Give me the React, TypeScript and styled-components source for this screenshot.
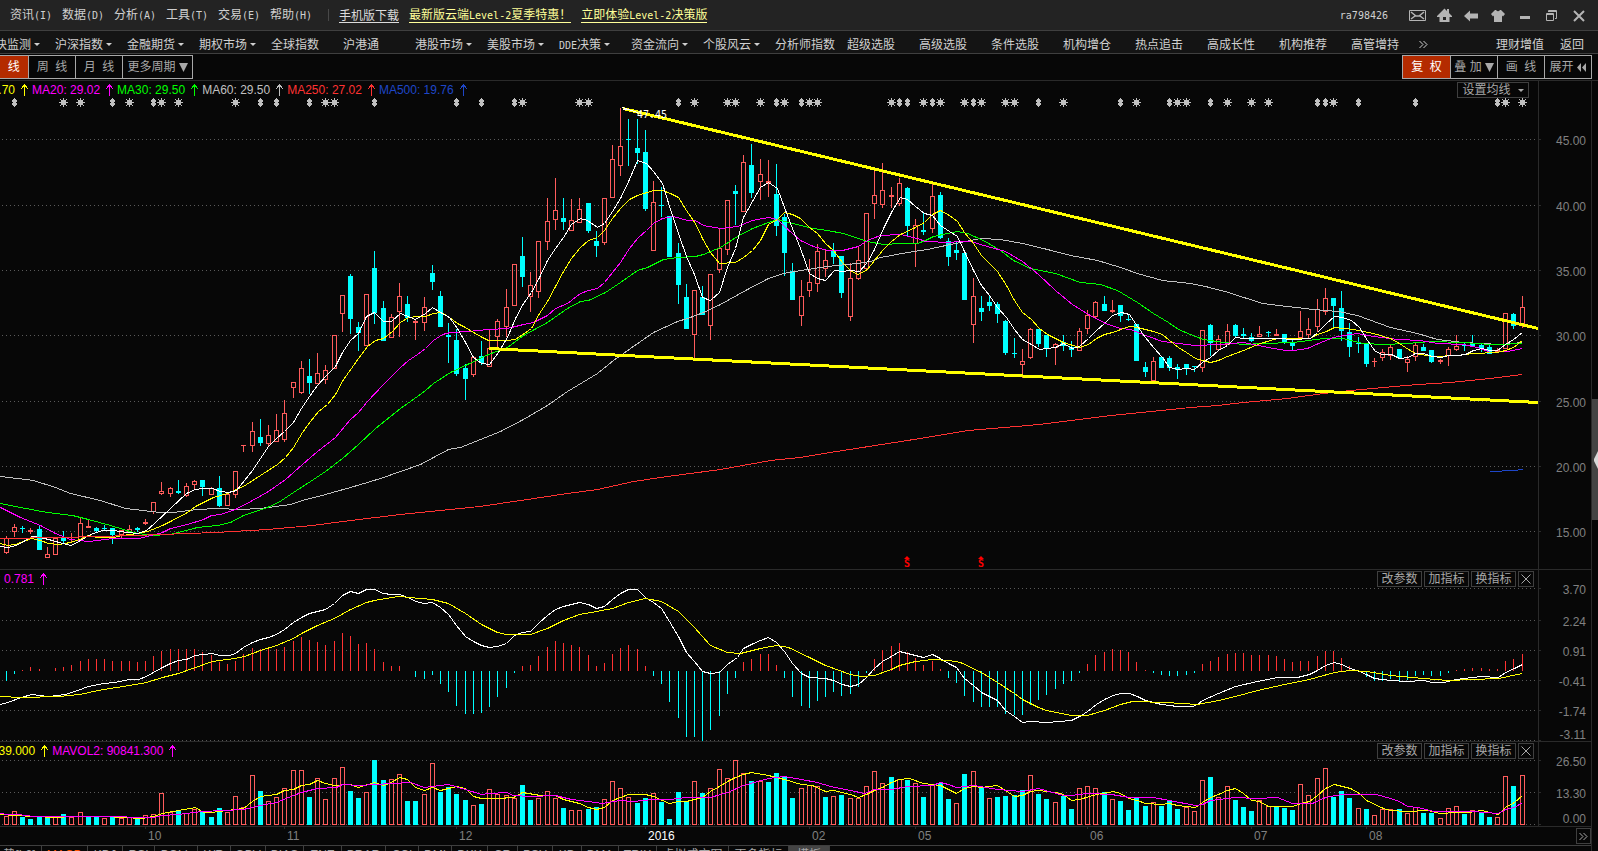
import React from "react";
import styled, { createGlobalStyle, css } from "styled-components";

/* ------------------------------------------------------------------ theme */

const color = {
  title: "#232323",
  nav: "#141414",
  page: "#070707",
  edge: "#3f3f3f",
  line: "#2a2a2a",
  button: "#a8a8a8",
  active: "#b42b00",
  text: "#d0d0d0",
  dim: "#808080",
  up: "#ff5c5c",
  down: "#00ffff",
  yellow: "#ffff00",
  magenta: "#ff00ff",
  green: "#00ff00",
  silver: "#c0c0c0",
  red: "#ff3232",
  blue: "#1e46c8",
};

const cjk = `"Liberation Sans", "Noto Sans CJK SC", sans-serif`;

const Global = createGlobalStyle`
  * { box-sizing: border-box; }
  body { margin: 0; background: ${color.page}; color: ${color.text};
    font: 12px/16px ${cjk}; overflow: hidden; }
  button { font: inherit; color: inherit; background: none; border: 0; padding: 0; margin: 0;
    white-space: pre; cursor: pointer; }
  a { color: inherit; text-decoration: none; }
  svg { display: block; }
`;

/* ------------------------------------------------------------------- data */

type Candle = { up: boolean; high: number; top: number; bottom: number; low: number };

const CANDLES: Candle[] = `
r536,538,553,554 r524,527,532,537 c526,528,529,533 r528,530,532,534 c526,529,550,550 r547,554,558,558 r538,538,555,555 c531,537,541,543
r533,537,538,542 r517,523,540,540 r520,526,528,528 c527,528,531,532 c525,528,529,530 c528,528,535,544 r530,530,535,538 r525,529,533,533
c527,528,530,532 r519,522,524,525 r502,502,512,514 r482,491,494,495 r487,488,494,497 c480,491,493,494 r483,486,496,497 r480,481,485,489
c480,480,487,496 r487,488,495,495 c476,488,506,507 r494,494,506,506 r471,471,495,498 r445,445,446,452 r422,431,446,452 c419,437,443,446
r425,435,444,446 r414,430,442,442 r400,413,440,442 r382,382,388,398 r361,368,393,394 c359,376,383,394 r353,373,384,384 r365,370,380,384
r335,335,369,369 r295,295,314,332 c274,276,319,334 c322,327,333,351 r294,294,346,346 c251,268,313,324 c301,308,341,341 r314,317,338,338
r283,296,312,337 c296,304,318,322 r319,321,323,340 r297,307,323,331 c265,273,282,290 c291,296,327,327 c323,335,337,363 c329,340,374,376
c364,368,379,400 r357,357,375,377 c341,356,363,365 r329,348,367,367 r319,321,337,347 r289,307,327,337 r264,264,306,306 c237,256,277,287
r272,285,297,312 r241,241,292,298 r198,221,242,250 r178,210,220,230 c198,218,222,230 r199,220,231,231 r198,209,223,223 c203,203,231,233
c231,241,246,257 r198,198,243,245 r145,159,198,198 r108,146,166,176 c119,139,140,166 c119,148,153,164 c130,152,209,211 r181,202,251,251
c187,205,206,217 c216,216,257,257 c243,253,285,304 c284,297,329,329 r290,290,335,358 c286,297,315,315 r274,274,326,340 r228,248,270,273
r200,200,250,255 c185,191,194,225 r155,162,212,212 c144,165,193,198 r159,174,182,200 r160,181,183,197 c164,194,226,236 c214,217,253,276
c263,271,300,300 r280,296,316,326 r259,282,291,297 r244,251,284,292 r250,260,269,277 c243,250,257,264 c256,256,293,298 r263,278,317,321
r247,260,279,280 r213,213,269,269 r170,195,204,219 r163,190,205,208 r187,195,197,208 r178,183,204,206 c187,188,226,237 r219,225,244,267
c213,230,232,235 r184,196,229,233 c192,195,238,239 c238,241,257,266 c241,250,253,260 c250,253,300,300 r278,296,325,343 c296,308,312,321
c295,302,306,311 c302,304,314,323 c320,321,353,355 c338,353,354,358 r349,361,365,378 r328,329,358,359 c329,329,344,347 c335,335,348,357
r343,344,348,365 c335,342,346,351 c341,347,350,357 r328,331,351,351 r310,315,329,334 r301,302,317,319 c296,304,311,311 r300,310,312,313
c305,305,316,322 c315,319,320,321 c324,324,361,361 c362,367,372,377 r357,361,381,381 c357,357,368,368 c356,358,368,371 c364,367,370,379
c364,364,368,375 c366,366,367,372 r330,330,368,372 c324,325,343,356 r335,339,350,350 r324,331,345,345 c324,325,336,337 c328,334,336,338
c333,337,341,342 r326,334,337,337 c331,332,333,337 r329,334,336,336 c334,334,343,344 c340,342,346,350 r311,331,338,338 r318,329,335,338
r299,309,327,332 r288,298,312,315 c298,298,306,327 c291,308,331,341 c323,332,347,357 c337,343,344,353 c344,344,364,367 r358,361,362,367
r349,352,358,361 r345,347,356,360 c349,349,358,358 r356,359,363,372 r343,345,357,361 c344,347,351,351 c350,350,362,363 r359,360,362,364
r347,349,356,366 r335,346,350,351 c342,345,346,351 c335,344,346,347 c343,345,348,352 c344,347,354,354 r348,350,352,353 r313,313,349,349
c313,314,326,329 r296,307,325,328
`
  .trim()
  .split(/\s+/)
  .map((t) => {
    const [high, top, bottom, low] = t.slice(1).split(",").map(Number);
    return { up: t[0] === "r", high, top, bottom, low };
  });

/** End of every MACD histogram bar; the zero line is at 671. */
const MACD_BARS = `
681 674 670 667 669 671 668 667 665 661 659 659 659 661 661 661 662 661 656 651 649 649 649 649 652 655 662 664 661 654 648 649 649 649 647 641
637 640 642 645 641 633 636 644 643 649 662 666 666 671 677 679 675 684 692 706 714 714 713 707 697 688 673 666 665 656 647 641 643 645 647 655
666 663 654 648 645 649 666 676 684 702 718 737 737 741 730 716 694 678 662 659 654 654 665 678 697 706 708 701 697 692 696 694 687 673 659 650
646 643 652 658 665 661 669 678 683 696 702 707 707 707 714 715 715 705 700 695 689 684 681 673 664 655 652 649 650 652 662 670 673 675 676 676
675 673 664 661 657 654 653 653 655 655 655 656 659 662 661 661 656 651 651 658 666 670 677 681 681 679 681 680 676 675 676 676 673 670 669 668
668 669 669 661 659 654
`
  .trim()
  .split(/\s+/)
  .map(Number);

const VOLUME: { up: boolean; top: number }[] = `
r816 r811 c817 c819 c816 c817 r817 c814 r817 r812 c816 c816 r818 c817 r818 r817 c818 r815 r814 r793 r812 c811 r813 r809 c812 c817 c808 r812
r796 r807 r775 c791 r801 r797 r788 r770 r770 c797 r778 r799 r778 r767 c791 c798 r792 c760 c780 r779 r774 c801 c801 r794 r763 c792 c787 c794
c800 r805 c804 r789 r794 r795 r798 c785 c800 r798 r791 r798 c808 r810 r810 c809 c807 r799 r781 r788 r797 c803 c798 r793 c802 c819 c792 c801
r781 c793 r788 r769 r778 r760 r773 c781 r781 c782 c773 c777 c798 r788 r785 r786 c797 r796 c795 r798 r798 r786 r771 r783 c777 r779 c780 r783
c797 r785 c783 c799 r803 c774 r771 c787 r798 c797 c796 c795 c790 r775 c794 c799 r802 c796 c809 r788 r786 r788 c792 r799 c801 c810 c798 c806
r802 c806 c800 c809 r807 r811 r780 c777 r797 r786 c800 c807 c811 r800 r806 c807 c808 c810 r784 r795 r778 r768 c797 c791 c798 r808 c809 r815
r809 r809 c809 r813 r807 c813 c813 r818 r808 r806 c814 r810 c812 c817 r817 r776 c786 r775
`
  .trim()
  .split(/\s+/)
  .map((t) => ({ up: t[0] === "r", top: Number(t.slice(1)) }));

const PRICE_LINES = [
  {
    stroke: color.silver,
    points:
      "0,476 17,478 33,480 55,487 70,493 100,500 125,508 160,512 173,512 197,509 217,508 240,509 260,508 290,504 302,500 325,494 350,487 367,482 383,477 400,471 420,464 448,449 460,447 480,439 500,431 523,419 547,405 567,391 597,373 613,360 630,348 653,332 677,321 687,318 703,312 720,304 747,289 768,278 783,273 800,270 827,266 857,263 870,261 880,257 907,252 927,249 950,244 980,238 1000,239 1022,243 1047,249 1070,255 1097,260 1120,267 1137,273 1162,280 1190,283 1205,286 1228,292 1262,303 1287,306 1313,309 1338,311 1357,315 1390,327 1417,333 1437,339 1463,342 1500,344 1512,343 1522,342",
  },
  {
    stroke: color.green,
    points:
      "0,503 20,507 47,512 72,515 88,519 110,525 133,532 150,535 170,534 197,527 217,525 230,522 243,515 267,507 278,502 293,492 310,481 325,471 342,458 358,444 375,428 400,408 417,396 425,390 433,383 450,372 467,364 488,354 507,347 523,335 547,322 567,308 580,301 588,300 605,292 620,282 637,270 647,267 663,259 677,257 695,256 703,254 720,247 737,236 752,228 768,222 777,219 800,225 813,228 827,230 843,233 867,241 883,244 900,243 917,243 925,240 933,236 947,233 957,231 967,233 983,240 1000,250 1013,260 1030,268 1055,273 1080,282 1100,284 1117,290 1137,302 1153,313 1168,322 1178,329 1190,334 1203,339 1223,342 1243,344 1263,343 1293,342 1323,338 1342,338 1363,343 1383,344 1407,343 1430,341 1463,342 1490,344 1498,344 1522,343",
  },
  {
    stroke: color.magenta,
    points:
      "0,507 20,517 40,525 55,533 70,539 88,541 113,538 138,538 147,536 162,532 170,528 187,524 203,519 211,515 220,514 235,509 252,500 268,491 285,479 293,472 302,464 317,451 335,437 350,419 358,412 367,401 383,384 400,367 408,360 417,354 425,348 433,340 442,334 450,332 467,331 488,329 507,328 523,324 533,322 547,315 555,308 567,303 580,293 588,290 597,288 604,282 612,272 620,262 629,248 637,238 646,230 653,223 662,218 673,216 687,220 695,220 703,225 720,228 737,226 752,220 768,217 777,219 784,226 800,240 813,246 827,250 842,250 858,246 867,240 880,235 900,234 917,238 925,241 950,242 958,241 970,241 987,246 1005,251 1022,261 1038,274 1055,290 1072,304 1088,314 1105,323 1120,328 1130,329 1145,335 1162,341 1178,343 1195,345 1218,344 1243,342 1268,347 1285,350 1293,350 1307,348 1318,343 1333,337 1343,335 1357,333 1373,336 1398,339 1420,340 1437,343 1463,344 1477,347 1490,352 1507,351 1522,348",
  },
  {
    stroke: color.yellow,
    points:
      "0,543 7,545 15,544 31,538 40,540 48,543 58,544 70,542 82,538 88,535 97,537 113,537 122,535 137,533 147,531 162,525 170,521 187,512 195,506 203,502 213,497 227,493 243,486 260,475 277,464 285,457 293,447 302,432 310,421 318,411 327,404 335,394 343,379 351,368 358,358 367,346 375,340 383,338 392,331 400,322 408,317 417,316 425,316 433,313 441,312 449,317 457,323 465,327 473,332 482,337 488,340 507,340 515,339 531,328 539,313 547,301 555,286 563,271 571,258 580,247 588,240 597,237 604,230 612,218 620,208 629,199 637,195 653,190 662,190 670,193 678,197 686,210 695,223 702,238 710,252 719,263 735,262 743,257 752,250 760,240 768,224 777,219 784,212 792,214 800,218 809,227 817,233 825,243 833,250 842,262 851,271 858,274 867,269 874,260 883,249 891,241 900,234 915,227 924,222 932,214 940,210 949,215 957,221 964,232 973,243 981,255 989,263 997,271 1006,285 1014,300 1022,312 1031,319 1039,328 1047,334 1063,342 1079,347 1088,344 1096,338 1104,334 1112,332 1129,326 1137,327 1153,331 1162,334 1169,340 1178,347 1186,352 1195,358 1202,360 1210,362 1218,360 1227,356 1243,350 1260,343 1277,338 1310,338 1317,334 1326,331 1334,327 1353,329 1373,333 1390,338 1399,343 1408,349 1415,353 1432,356 1457,355 1473,353 1497,352 1505,350 1513,347 1522,340",
  },
  {
    stroke: "#ffffff",
    points:
      "0,546 7,547 16,545 32,536 40,537 52,540 62,543 71,545 80,540 90,534 102,530 113,530 127,532 137,533 146,530 154,523 170,508 186,493 195,489 203,488 212,488 220,491 228,492 236,490 244,480 252,470 260,458 268,446 276,438 284,431 293,422 301,408 309,396 317,385 326,375 335,366 342,352 350,340 358,333 366,316 374,312 383,321 391,321 400,313 415,319 425,313 432,307 440,312 449,317 457,328 465,342 473,357 481,363 489,364 498,352 507,337 515,318 523,303 531,292 539,277 547,260 555,248 563,237 571,224 580,218 587,220 597,227 604,223 612,211 620,198 629,179 637,160 646,163 653,171 662,183 670,209 678,233 686,256 694,274 702,297 710,300 719,292 727,267 735,248 743,217 752,201 760,187 768,182 777,188 784,207 792,228 800,248 809,273 817,278 825,280 834,270 842,271 850,270 859,271 867,262 874,249 883,228 891,212 900,197 907,199 915,206 924,213 932,215 940,225 949,231 957,236 964,251 973,270 981,285 989,295 997,307 1006,317 1014,329 1022,339 1031,344 1039,349 1047,348 1055,347 1063,343 1072,348 1079,346 1088,338 1096,330 1104,323 1112,315 1121,312 1129,314 1137,326 1145,337 1153,347 1162,357 1169,367 1178,369 1186,368 1194,369 1202,362 1210,357 1218,350 1227,345 1235,337 1243,338 1260,338 1277,338 1293,339 1310,338 1317,332 1326,323 1334,316 1342,317 1351,320 1359,327 1367,340 1375,351 1382,354 1391,354 1399,358 1408,357 1415,353 1423,353 1432,356 1440,357 1449,355 1457,355 1465,354 1473,350 1482,348 1489,350 1497,350 1505,344 1513,339 1522,332",
  },
  {
    stroke: color.red,
    points:
      "0,538 60,537 133,535 215,532 267,529 312,525 350,520 400,514 479,506 527,499 567,493 597,489 633,481 667,476 720,469 770,460 800,457 836,451 907,440 968,430 1039,424 1111,415 1190,407 1217,405 1243,402 1287,398 1323,393 1350,390 1383,387 1417,384 1450,382 1490,378 1522,374",
  },
  { stroke: color.blue, points: "1489,471 1501,471 1502,470 1517,470 1518,469 1522,469" },
];

const MACD_LINES = [
  {
    stroke: "#ffffff",
    points:
      "0,704 7,702 21,697 31,694 48,696 65,694 77,690 88,686 103,683 114,682 129,679 138,679 146,676 153,672 162,667 170,663 178,660 186,659 195,655 203,654 212,653 219,655 229,655 235,653 243,647 252,642 260,639 268,637 276,634 284,629 293,622 301,617 309,613 317,611 325,609 334,603 342,595 350,591 358,593 366,589 374,589 383,593 391,594 399,594 410,598 415,601 424,603 432,602 440,607 448,614 456,625 465,636 473,641 481,645 489,647 497,646 506,643 514,635 522,632 530,631 539,622 547,615 555,609 563,606 579,602 588,604 596,608 604,606 612,599 620,593 628,589 637,589 645,597 653,602 661,608 669,621 678,636 686,652 694,661 702,671 710,673 719,672 727,664 737,657 743,648 751,644 760,640 768,637 776,642 784,651 792,663 801,673 809,677 825,678 833,680 842,684 850,686 858,684 866,677 874,668 882,661 891,656 899,651 915,655 923,657 932,654 940,658 948,663 956,667 964,678 973,685 981,692 997,700 1005,710 1014,716 1022,722 1030,721 1046,722 1071,720 1081,715 1087,711 1096,704 1104,699 1113,695 1120,693 1129,693 1137,696 1145,700 1161,704 1177,706 1192,706 1197,704 1202,700 1218,693 1235,686 1257,681 1277,677 1297,677 1309,674 1317,670 1325,665 1334,662 1341,664 1350,668 1359,671 1366,674 1374,678 1390,680 1407,681 1423,680 1432,682 1443,682 1456,679 1472,677 1481,676 1498,677 1505,672 1514,668 1522,664",
  },
  {
    stroke: color.yellow,
    points:
      "0,696 21,697 59,696 79,694 103,689 129,685 146,682 162,677 178,673 195,667 212,661 234,658 244,656 260,650 276,645 293,638 301,633 317,625 334,618 350,609 366,602 374,600 391,597 399,596 420,598 432,599 448,603 465,613 481,624 497,632 506,634 530,634 547,628 563,620 579,614 596,611 612,608 628,602 645,598 661,601 678,611 694,627 710,645 727,652 740,653 760,648 776,645 788,647 809,657 825,665 850,674 861,676 874,675 891,669 899,665 915,661 932,659 948,660 960,662 981,672 997,682 1014,693 1022,699 1038,707 1046,710 1071,715 1087,715 1104,710 1120,704 1132,701 1166,702 1197,704 1218,700 1235,696 1257,690 1284,684 1309,679 1334,672 1350,670 1366,671 1390,675 1423,678 1448,680 1472,679 1498,678 1522,673",
  },
];

const VOLUME_LINES = [
  {
    stroke: color.yellow,
    points:
      "0,814 14,815 55,817 72,816 103,816 124,817 141,818 153,816 162,813 178,810 195,807 203,812 210,812 227,810 243,808 252,801 260,796 276,794 284,790 293,789 301,785 309,784 317,780 325,783 334,785 350,784 358,787 374,782 383,785 391,782 399,777 407,779 415,787 424,790 432,787 440,790 456,786 465,788 473,796 481,798 497,798 513,797 522,792 540,795 555,795 563,799 579,803 588,807 596,809 604,807 612,800 620,797 628,794 645,794 653,796 669,803 678,801 686,801 702,797 710,791 719,786 727,781 735,777 743,774 751,772 768,775 784,779 801,784 812,785 825,791 833,790 850,794 858,797 866,794 874,790 882,787 891,782 899,779 909,778 923,783 940,785 956,793 964,788 973,786 981,787 997,785 1005,790 1014,796 1022,795 1030,791 1038,790 1055,792 1063,794 1071,800 1079,799 1096,794 1113,791 1120,793 1128,798 1137,800 1145,803 1161,804 1169,803 1177,805 1195,807 1202,802 1210,797 1218,794 1227,790 1235,788 1243,793 1251,800 1259,801 1268,806 1292,806 1301,803 1309,801 1317,795 1325,788 1334,784 1350,788 1359,793 1366,800 1383,808 1390,810 1407,811 1427,810 1440,813 1456,812 1468,812 1481,810 1498,814 1505,807 1514,802 1522,795",
  },
  {
    stroke: color.magenta,
    points:
      "0,813 7,814 17,814 34,816 55,816 114,816 138,817 153,817 162,815 178,814 202,811 243,809 260,805 276,802 293,795 301,792 317,788 336,787 342,784 358,785 375,784 391,783 410,782 424,787 448,784 465,789 481,794 489,793 506,792 513,795 530,796 555,795 571,799 588,801 602,803 620,800 633,801 653,799 669,799 686,797 710,797 727,792 743,785 757,781 768,778 784,776 801,779 817,782 830,786 850,790 864,793 874,789 891,789 907,786 932,785 940,782 948,784 956,787 973,785 997,789 1022,791 1038,788 1063,795 1071,795 1087,793 1111,794 1129,797 1153,797 1169,800 1195,805 1202,804 1210,800 1235,797 1256,798 1277,797 1292,803 1312,803 1325,797 1341,794 1376,794 1390,798 1399,801 1407,806 1417,807 1434,811 1472,811 1498,813 1505,809 1514,807 1522,802",
  },
];

/** Event marks above the candles, by candle index. */
const STARS = [
  7, 9, 15, 19, 21, 28, 39, 40, 63, 70, 71, 84, 88, 89, 92, 95, 98, 99, 108, 112, 114, 117, 119,
  122, 123, 129, 138, 143, 144, 149, 152, 154, 162, 183, 185,
];
const DIAMONDS = [
  1, 13, 18, 31, 33, 37, 45, 55, 58, 62, 82, 94, 97, 109, 110, 113, 118, 126, 136, 142, 147, 160,
  161, 165, 172, 182,
];

const MENU = [
  ["资讯", "(I)"],
  ["数据", "(D)"],
  ["分析", "(A)"],
  ["工具", "(T)"],
  ["交易", "(E)"],
  ["帮助", "(H)"],
];

const NAV: [string, boolean][] = [
  ["板块监测", true],
  ["沪深指数", true],
  ["金融期货", true],
  ["期权市场", true],
  ["全球指数", false],
  ["沪港通", false],
  ["港股市场", true],
  ["美股市场", true],
  ["DDE决策", true],
  ["资金流向", true],
  ["个股风云", true],
  ["分析师指数", false],
  ["超级选股", false],
  ["高级选股", false],
  ["条件选股", false],
  ["机构增仓", false],
  ["热点追击", false],
  ["高成长性", false],
  ["机构推荐", false],
  ["高管增持", false],
];

const TABS: [string, number][] = [
  ["大势[L2]", 56],
  ["MACD", 46],
  ["KDJ", 35],
  ["RSI", 32],
  ["BOLL", 43],
  ["WR", 33],
  ["OBV", 35],
  ["BIAS", 38],
  ["ENE", 38],
  ["BRAR", 44],
  ["CCI", 33],
  ["DMI", 33],
  ["DKX", 36],
  ["CR", 30],
  ["PSY", 35],
  ["KD", 29],
  ["DMA", 37],
  ["TRIX", 38],
  ["虚拟成交图", 72],
  ["更多指标", 60],
  ["模板", 41],
];

const MONTHS: [number, string, boolean?][] = [
  [145, "10"],
  [284, "11"],
  [456, "12"],
  [645, "2016", true],
  [809, "02"],
  [915, "05"],
  [1087, "06"],
  [1251, "07"],
  [1366, "08"],
];

/* ------------------------------------------------------- styled components */

const Page = styled.div`
  display: flex;
  flex-direction: column;
  height: 100vh;
  overflow: hidden;
`;

const TitleBar = styled.header`
  flex: none;
  display: flex;
  align-items: center;
  height: 31px;
  padding: 0 10px 0 10px;
  background: ${color.title};
  border-bottom: 1px solid ${color.edge};
`;

const Menu = styled.nav`
  display: flex;
`;

const MenuButton = styled.button`
  width: 52px;
  text-align: left;
`;

const Latin = styled.span`
  font: 10px/12px "DejaVu Sans Mono", "Liberation Mono", monospace;
`;

const Divider = styled.i`
  width: 1px;
  height: 12px;
  margin: 0 10px 0 6px;
  background: #484848;
`;

const PromoLink = styled.a<{ $hot?: boolean }>`
  margin: 2px 10px 0 0;
  line-height: 12px;
  white-space: nowrap;
  color: ${(p) => (p.$hot ? "#ffff99" : "#dcdcdc")};
  border-bottom: 1px solid currentColor;
`;

const User = styled.span`
  margin: 0 21px 0 auto;
`;

const WindowTools = styled.div`
  display: flex;
  align-items: center;
  gap: 10px;
`;

const ToolButton = styled.button`
  display: block;
  width: 17px;
  height: 15px;
`;

const NavBar = styled.nav`
  flex: none;
  display: flex;
  align-items: center;
  height: 23px;
  padding: 5px 14px 0 0;
  overflow: hidden;
  background: ${color.nav};
  border-bottom: 1px solid ${color.edge};
`;

const NavList = styled.div`
  display: flex;
  margin-left: -17px;
`;

const NavButton = styled.button`
  display: flex;
  flex: none;
  align-items: center;
  gap: 3px;
  width: 72px;
  &:last-child {
    width: 48px;
  }
`;

const Caret = styled.i<{ $tone?: string }>`
  border: 3px solid transparent;
  border-top-color: ${(p) => p.$tone ?? color.text};
  border-bottom: 0;
`;

const MoreButton = styled.button`
  margin-left: 20px;
`;

const NavLinks = styled.div`
  display: flex;
  gap: 16px;
  margin-left: auto;
`;

const ToolBar = styled.div`
  flex: none;
  display: flex;
  justify-content: space-between;
  height: 27px;
  padding: 1px 6px 0 0;
  border-bottom: 1px solid ${color.line};
`;

const Segments = styled.div<{ $clip?: boolean }>`
  display: flex;
  height: 24px;
  margin-left: ${(p) => (p.$clip ? "-20px" : "0")};
  border: 1px solid ${color.button};
`;

const Segment = styled.button<{ $active?: boolean; $wide?: boolean }>`
  display: flex;
  align-items: center;
  justify-content: center;
  gap: 3px;
  width: ${(p) => (p.$wide ? 70 : 47)}px;
  color: ${color.button};
  & + & {
    border-left: 1px solid ${color.button};
  }
  ${(p) =>
    p.$active &&
    css`
      color: #fff;
      background: ${color.active};
    `}
`;

const Workspace = styled.main`
  flex: 1;
  display: flex;
  min-height: 0;
`;

const Panels = styled.div`
  flex: 1;
  display: flex;
  flex-direction: column;
  min-width: 0;
  border-right: 1px solid ${color.line};
`;

const Panel = styled.section<{ $height?: number }>`
  display: flex;
  min-height: 0;
  flex: ${(p) => (p.$height ? `none` : "1")};
  height: ${(p) => (p.$height ? `${p.$height}px` : "auto")};
  border-bottom: 1px solid ${color.line};
`;

const Plot = styled.div`
  position: relative;
  flex: 1;
  min-width: 0;
  border-right: 1px solid ${color.line};
  overflow: hidden;
  svg.plot {
    width: 100%;
    height: 100%;
  }
`;

const Axis = styled.svg`
  flex: none;
  width: 52px;
  height: 100%;
  font: 12px ${cjk};
  fill: ${color.dim};
`;

const Legend = styled.div<{ $shift: number }>`
  position: absolute;
  top: 1px;
  left: 0;
  display: flex;
  margin-left: ${(p) => -p.$shift}px;
  white-space: nowrap;
`;

const LegendItem = styled.span<{ $tone: string }>`
  display: flex;
  align-items: center;
  gap: 6px;
  margin-right: 4px;
  color: ${(p) => p.$tone};
`;

const PanelTools = styled.div`
  position: absolute;
  top: 1px;
  right: 4px;
  display: flex;
  gap: 2px;
`;

const PanelButton = styled.button<{ $width: number }>`
  display: flex;
  align-items: center;
  justify-content: center;
  gap: 7px;
  width: ${(p) => p.$width}px;
  height: 16px;
  line-height: 14px;
  color: ${color.button};
  border: 1px solid ${color.edge};
`;

const AverageTool = styled.div`
  position: absolute;
  top: 1px;
  right: 9px;
`;

const TimeRow = styled.div`
  flex: none;
  display: flex;
  height: 19px;
  border-bottom: 1px solid ${color.edge};
`;

const TimePlot = styled.div`
  flex: 1;
  svg {
    width: 100%;
    height: 100%;
    font: 12px ${cjk};
  }
`;

const ForwardCell = styled.div`
  width: 53px;
  display: flex;
  justify-content: flex-end;
  padding-top: 1px;
`;

const TabRow = styled.div`
  flex: none;
  display: flex;
  height: 5px;
  margin-left: -14px;
  overflow: hidden;
`;

const Tab = styled.button<{ $width: number; $on?: boolean; $filled?: boolean }>`
  flex: none;
  width: ${(p) => p.$width}px;
  height: 18px;
  text-align: center;
  color: ${(p) => (p.$on ? "#ff5500" : color.button)};
  background: ${(p) => (p.$filled ? "#444" : "none")};
  border-right: 1px solid ${color.edge};
`;

const Strip = styled.aside`
  width: 6px;
  display: flex;
  flex-direction: column;
  justify-content: center;
  padding-bottom: 13px;
`;

const StripHandle = styled.button`
  display: flex;
  align-items: center;
  justify-content: flex-end;
  height: 121px;
  background: #444;
`;

/* ----------------------------------------------------------- small pieces */

const barX = (i: number) => Math.floor(6.3 + 8.193 * i);

const Rise = () => (
  <svg width="7" height="12" viewBox="0 0 7 12" shapeRendering="crispEdges">
    <path d="M3.5 0V12M2.5 1V3M4.5 1V3M1.5 2V4M5.5 2V4M0.5 4V5M6.5 4V5" stroke="currentColor" />
  </svg>
);

const Down = ({ size = 9 }: { size?: number }) => (
  <svg width={size} height={size} viewBox="0 0 9 9">
    <path d="M0 0H9L4.5 9Z" fill="currentColor" />
  </svg>
);

const Chevrons = ({ size = 9 }: { size?: number }) => (
  <svg width={size} height={size} viewBox="0 0 9 9" fill="none" stroke="currentColor">
    <path d="M0.5 1L4 4.5L0.5 8M4.5 1L8 4.5L4.5 8" />
  </svg>
);

const GridRows = ({ rows }: { rows: number[] }) => (
  <path
    d={rows.map((y) => `M2 ${y + 0.5}H1538`).join("")}
    stroke="#5a5a5a"
    strokeDasharray="1 3"
    shapeRendering="crispEdges"
  />
);

const Lines = ({ items }: { items: { stroke: string; points: string }[] }) => (
  <g transform="translate(0.5 0.5)" fill="none" shapeRendering="crispEdges">
    {items.map((l) => (
      <polyline key={l.stroke} points={l.points} stroke={l.stroke} />
    ))}
  </g>
);

const AxisLabels = ({
  top,
  height,
  labels,
  ticks,
}: {
  top: number;
  height: number;
  labels: [number, string][];
  ticks: number[];
}) => (
  <Axis viewBox={`0 ${top} 52 ${height}`} preserveAspectRatio="none">
    <path d={ticks.map((y) => `M0 ${y + 0.5}H2`).join("")} stroke={color.line} />
    {labels.map(([y, label]) => (
      <text key={label} x="47" y={y + 4} textAnchor="end">
        {label}
      </text>
    ))}
  </Axis>
);

const IndicatorTools = () => (
  <PanelTools>
    <PanelButton $width={45}>改参数</PanelButton>
    <PanelButton $width={45}>加指标</PanelButton>
    <PanelButton $width={45}>换指标</PanelButton>
    <PanelButton $width={16} aria-label="关闭">
      <svg width="10" height="10" viewBox="0 0 10 10">
        <path d="M0.5 0.5L9.5 9.5M9.5 0.5L0.5 9.5" stroke="currentColor" />
      </svg>
    </PanelButton>
  </PanelTools>
);

/* ----------------------------------------------------------------- panels */

const CandleMark = ({ c, x }: { c: Candle; x: number }) => {
  const tone = c.up ? color.up : color.down;
  const height = c.bottom - c.top;
  if (!c.up || height <= 2) {
    return (
      <g fill={tone}>
        <rect x={x} y={c.high} width="1" height={c.low - c.high} />
        <rect x={x - 2} y={c.top} width="5" height={height} />
      </g>
    );
  }
  return (
    <g fill={tone}>
      <rect x={x} y={c.high} width="1" height={c.top - c.high} />
      <rect x={x} y={c.bottom} width="1" height={c.low - c.bottom} />
      <rect x={x - 1.5} y={c.top + 0.5} width="4" height={height - 1} fill="none" stroke={tone} />
    </g>
  );
};

const SignalMark = ({ x }: { x: number }) => (
  <g fill="#ff0000">
    <path d={`M${x - 2} 559L${x + 1} 556L${x + 4} 559Z`} />
    <text
      x={x + 1}
      y="567"
      textAnchor="middle"
      fontFamily="DejaVu Sans Mono, monospace"
      fontSize="10"
      fontWeight="bold"
    >
      S
    </text>
  </g>
);

const PriceChart = () => (
  <svg className="plot" viewBox="0 81 1538 488" preserveAspectRatio="none">
    <GridRows rows={[139, 205, 270, 335, 401, 466, 531]} />
    <g shapeRendering="crispEdges">
      {CANDLES.map((c, i) => (
        <CandleMark key={i} c={c} x={barX(i)} />
      ))}
    </g>
    <g fill={color.silver} stroke={color.silver} shapeRendering="crispEdges">
      {DIAMONDS.map((i) => (
        <path
          key={i}
          stroke="none"
          d={`M${barX(i)} 98h1v1h1v1h1v2h-1v1h1v2h-1v1h-1v1h-1v-1h-1v-1h-1v-2h1v-1h-1v-2h1v-1h1z`}
        />
      ))}
      {STARS.map((i) => (
        <g key={i} transform={`translate(${barX(i)} 102)`}>
          <rect x="-2" y="-2" width="5" height="5" stroke="none" />
          <path d="M0.5 -4V5M-4 0.5H5M-3 -2.5H-2M3 -2.5H4M-3 3.5H-2M3 3.5H4" />
        </g>
      ))}
    </g>
    <Lines items={PRICE_LINES} />
    <g stroke={color.yellow} strokeWidth="3" shapeRendering="crispEdges">
      <path d="M623 108.5L1538 328.5" />
      <path d="M489 348.5L1538 402.5" />
    </g>
    <path d="M622 107.5L638 112.5M623 109.5H627" stroke="#fff" shapeRendering="crispEdges" />
    <text x="637" y="118" fill="#fff" fontFamily="DejaVu Sans Mono, monospace" fontSize="10">
      47.45
    </text>
    <SignalMark x={906} />
    <SignalMark x={980} />
  </svg>
);

const MacdChart = () => (
  <svg className="plot" viewBox="0 570 1538 171" preserveAspectRatio="none">
    <GridRows rows={[588, 620, 650, 680, 710, 740]} />
    <g shapeRendering="crispEdges">
      {MACD_BARS.map((y, i) => (
        <rect
          key={i}
          x={barX(i)}
          y={Math.min(y, 671)}
          width="1"
          height={Math.abs(y - 671)}
          fill={y > 671 ? color.down : color.red}
        />
      ))}
    </g>
    <Lines items={MACD_LINES} />
  </svg>
);

const VolumeChart = () => (
  <svg className="plot" viewBox="0 742 1538 84" preserveAspectRatio="none">
    <GridRows rows={[760, 792, 824]} />
    <g shapeRendering="crispEdges">
      {VOLUME.map((v, i) =>
        v.up ? (
          <rect
            key={i}
            x={barX(i) - 1.5}
            y={v.top + 0.5}
            width="4"
            height={824 - v.top}
            fill={color.page}
            stroke={color.up}
          />
        ) : (
          <rect key={i} x={barX(i) - 2} y={v.top} width="5" height={825 - v.top} fill={color.down} />
        ),
      )}
    </g>
    <Lines items={VOLUME_LINES} />
  </svg>
);

/* -------------------------------------------------------------------- app */

export default function App() {
  return (
    <Page>
      <Global />
      <TitleBar>
        <Menu>
          {MENU.map(([name, key]) => (
            <MenuButton key={name}>
              {name}
              <Latin>{key}</Latin>
            </MenuButton>
          ))}
        </Menu>
        <Divider />
        <PromoLink href="#mobile">手机版下载</PromoLink>
        <PromoLink href="#cloud" $hot>
          最新版云端<Latin>Level-2</Latin>夏季特惠！
        </PromoLink>
        <PromoLink href="#level2" $hot>
          立即体验<Latin>Level-2</Latin>决策版
        </PromoLink>
        <User>
          <Latin>ra798426</Latin>
        </User>
        <WindowTools>
          <ToolButton aria-label="邮件">
            <svg width="17" height="15" viewBox="0 0 17 15" fill="none" stroke="#b4b4b4">
              <path d="M0.5 2.5H16.5V12.5H0.5Z" />
              <path d="M2 4L7 8H10L15 4M2 11L6 8M15 11L11 8" strokeWidth="1.5" />
            </svg>
          </ToolButton>
          <ToolButton aria-label="首页">
            <svg width="17" height="15" viewBox="0 0 17 15" fill="#b4b4b4">
              <path
                fillRule="evenodd"
                d="M1 8L8.5 0.5L11 3V1H13V5L16 8V9H13.5V14H3.5V9H1ZM7 9V12H10V9Z"
              />
            </svg>
          </ToolButton>
          <ToolButton aria-label="后退">
            <svg width="17" height="15" viewBox="0 0 17 15" fill="#b4b4b4">
              <path d="M1 8L7 2.5V5.5H15V10.5H7V13.5Z" />
            </svg>
          </ToolButton>
          <ToolButton aria-label="换肤">
            <svg width="17" height="15" viewBox="0 0 17 15" fill="#b4b4b4">
              <path d="M5 2H6Q8 4.5 10 2H11L15 6L13 8.5L12 7.5V14H4V7.5L3 8.5L1 6Z" />
            </svg>
          </ToolButton>
          <ToolButton aria-label="最小化">
            <svg width="17" height="15" viewBox="0 0 17 15" fill="#b4b4b4">
              <path d="M3 8H13V11H3Z" />
            </svg>
          </ToolButton>
          <ToolButton aria-label="还原">
            <svg width="17" height="15" viewBox="0 0 17 15" fill="none" stroke="#b4b4b4">
              <path d="M2.5 5.5H9.5V12.5H2.5ZM2 6.5H10M4.5 4V2.5H12.5V10.5H11M4 3.5H12" />
            </svg>
          </ToolButton>
          <ToolButton aria-label="关闭窗口">
            <svg width="17" height="15" viewBox="0 0 17 15" fill="none" stroke="#b4b4b4">
              <path d="M3 3L13 13M13 3L3 13" strokeWidth="2" />
            </svg>
          </ToolButton>
        </WindowTools>
      </TitleBar>

      <NavBar>
        <NavList>
          {NAV.map(([label, drop]) => (
            <NavButton key={label}>
              {label.startsWith("DDE") ? (
                <span>
                  <Latin>DDE</Latin>
                  {label.slice(3)}
                </span>
              ) : (
                label
              )}
              {drop && <Caret />}
            </NavButton>
          ))}
        </NavList>
        <MoreButton aria-label="更多">
          <Chevrons />
        </MoreButton>
        <NavLinks>
          <a href="#wealth">理财增值</a>
          <a href="#back">返回</a>
        </NavLinks>
      </NavBar>

      <ToolBar>
        <Segments $clip>
          <Segment $active>{"日  线"}</Segment>
          <Segment>{"周  线"}</Segment>
          <Segment>{"月  线"}</Segment>
          <Segment $wide>
            更多周期
            <Down />
          </Segment>
        </Segments>
        <Segments>
          <Segment $active>{"复  权"}</Segment>
          <Segment>
            {"叠 加"}
            <Down />
          </Segment>
          <Segment>{"画  线"}</Segment>
          <Segment>
            展开
            <svg width="10" height="9" viewBox="0 0 10 9" fill="currentColor">
              <path d="M0 4.5L4 0V9ZM5 4.5L9 0V9Z" />
            </svg>
          </Segment>
        </Segments>
      </ToolBar>

      <Workspace>
        <Panels>
          <Panel>
            <Plot>
              <PriceChart />
              <Legend $shift={53}>
                <LegendItem $tone={color.yellow}>
                  MA10: 29.70 <Rise />
                </LegendItem>
                <LegendItem $tone={color.magenta}>
                  MA20: 29.02 <Rise />
                </LegendItem>
                <LegendItem $tone={color.green}>
                  MA30: 29.50 <Rise />
                </LegendItem>
                <LegendItem $tone={color.silver}>
                  MA60: 29.50 <Rise />
                </LegendItem>
                <LegendItem $tone={color.red}>
                  MA250: 27.02 <Rise />
                </LegendItem>
                <LegendItem $tone={color.blue}>
                  MA500: 19.76 <Rise />
                </LegendItem>
              </Legend>
              <AverageTool>
                <PanelButton $width={72}>
                  设置均线
                  <Caret $tone={color.button} />
                </PanelButton>
              </AverageTool>
            </Plot>
            <AxisLabels
              top={81}
              height={488}
              ticks={[139, 205, 270, 335, 401, 466, 531]}
              labels={[
                [141, "45.00"],
                [207, "40.00"],
                [272, "35.00"],
                [337, "30.00"],
                [403, "25.00"],
                [468, "20.00"],
                [533, "15.00"],
              ]}
            />
          </Panel>

          <Panel $height={172}>
            <Plot>
              <MacdChart />
              <Legend $shift={38}>
                <LegendItem $tone={color.magenta}>
                  MACD: 0.781 <Rise />
                </LegendItem>
              </Legend>
              <IndicatorTools />
            </Plot>
            <AxisLabels
              top={570}
              height={171}
              ticks={[588, 620, 650, 680, 710, 740]}
              labels={[
                [590, "3.70"],
                [622, "2.24"],
                [652, "0.91"],
                [682, "-0.41"],
                [712, "-1.74"],
                [735, "-3.11"],
              ]}
            />
          </Panel>

          <Panel $height={85}>
            <Plot>
              <VolumeChart />
              <Legend $shift={76}>
                <LegendItem $tone={color.yellow}>
                  MAVOL1: 97539.000 <Rise />
                </LegendItem>
                <LegendItem $tone={color.magenta}>
                  MAVOL2: 90841.300 <Rise />
                </LegendItem>
              </Legend>
              <IndicatorTools />
            </Plot>
            <AxisLabels
              top={742}
              height={84}
              ticks={[760, 792, 824]}
              labels={[
                [762, "26.50"],
                [794, "13.30"],
                [819, "0.00"],
              ]}
            />
          </Panel>

          <TimeRow>
            <TimePlot>
              <svg viewBox="0 827 1538 18" preserveAspectRatio="none">
                {MONTHS.map(([x, label, year]) => (
                  <g key={label}>
                    <path d={`M${x + 0.5} 827V829`} stroke={color.line} />
                    <text x={x + 3} y="840" fill={year ? "#fff" : color.dim}>
                      {label}
                    </text>
                  </g>
                ))}
              </svg>
            </TimePlot>
            <ForwardCell>
              <PanelButton $width={15} aria-label="前进">
                <Chevrons />
              </PanelButton>
            </ForwardCell>
          </TimeRow>

          <TabRow>
            {TABS.map(([name, width]) => (
              <Tab key={name} $width={width} $on={name === "MACD"} $filled={name === "模板"}>
                {name}
              </Tab>
            ))}
          </TabRow>
        </Panels>
        <Strip>
          <StripHandle aria-label="展开侧栏">
            <svg width="4" height="18" viewBox="0 0 4 18" fill="#d8d8d8">
              <path d="M4 0V18L0 10V8Z" />
            </svg>
          </StripHandle>
        </Strip>
      </Workspace>
    </Page>
  );
}
